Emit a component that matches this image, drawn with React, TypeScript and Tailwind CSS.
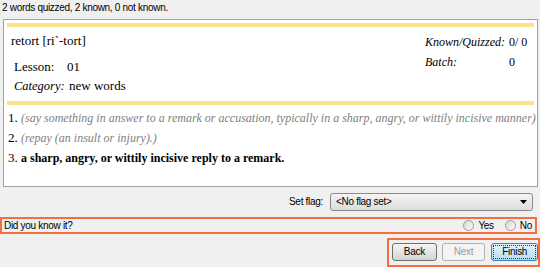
import React from 'react';

const ui = { fontFamily: '"Liberation Sans", Arial, sans-serif' };
const serif = { fontFamily: '"Liberation Serif", "Times New Roman", serif' };

const Radio: React.FC<{ label: string }> = ({ label }) => (
    <label className="flex items-center gap-[4px] text-black">
        <span className="w-[11px] h-[11px] rounded-full border border-[#9a9a9a] bg-gradient-to-br from-[#d8d8d8] to-[#fbfbfb]" />
        <span>{label}</span>
    </label>
);

const Button: React.FC<{ label: string; variant?: 'normal' | 'disabled' | 'default'; className?: string }> = ({
    label,
    variant = 'normal',
    className = '',
}) => {
    if (variant === 'disabled') {
        return (
            <button
                type="button"
                className={`h-[18px] rounded-[3px] border border-[#adb2b5] bg-[#f4f4f4] text-[#9a9a9a] ${className}`}
            >
                {label}
            </button>
        );
    }
    if (variant === 'default') {
        return (
            <button
                type="button"
                className={`h-[18px] rounded-[3px] border border-[#3c7fb1] bg-gradient-to-b from-[#e5f4fc] to-[#b3dcf2] p-[1px] text-black ${className}`}
            >
                <span className="flex h-full w-full items-center justify-center border border-dotted border-[#333]">{label}</span>
            </button>
        );
    }
    return (
        <button
            type="button"
            className={`h-[18px] rounded-[3px] border border-[#707070] bg-gradient-to-b from-[#f4f4f4] to-[#d4d4d4] text-black ${className}`}
        >
            {label}
        </button>
    );
};

export default function App() {
    return (
        <div className="w-[540px] h-[267px] overflow-hidden bg-[#f0f0f0] flex flex-col text-[10px] tracking-[-0.3px]" style={ui}>
            <div className="h-[17px] pl-[2px] leading-[16px] text-black">
                2 words quizzed, 2 known, 0 not known.
            </div>

            <div className="ml-[3px] mt-[2px] w-[535px] h-[172px] border border-[#a0a0a8] bg-white px-[2px] pt-[3px] flex flex-col tracking-normal" style={serif}>
                <div className="h-[4px] bg-[#fde18b] mx-[1px]" />

                <div className="flex justify-between text-[13px] text-black">
                    <div className="flex flex-col">
                        <div className="h-[20px] mt-[4px] leading-[20px] pl-[5px]">retort [ri`-tort]</div>
                        <div className="h-[19px] mt-[6px] leading-[20px] pl-[8px] flex">
                            <span className="w-[53px]">Lesson:</span>
                            <span>01</span>
                        </div>
                        <div className="h-[20px] leading-[20px] pl-[8px] flex">
                            <span className="w-[55px] italic text-[12.5px]">Category:</span>
                            <span>new words</span>
                        </div>
                    </div>
                    <div className="flex flex-col w-[110px] text-[12px]">
                        <div className="h-[20px] mt-[5px] leading-[20px] flex">
                            <span className="w-[84px] italic">Known/Quizzed:</span>
                            <span>0/ 0</span>
                        </div>
                        <div className="h-[20px] leading-[20px] flex">
                            <span className="w-[84px] italic">Batch:</span>
                            <span>0</span>
                        </div>
                    </div>
                </div>

                <div className="h-[4px] bg-[#fde18b] mx-[1px] mt-[5px]" />

                <div className="mt-[3px] text-[12px] leading-[20px] pl-[2px]">
                    <div className="whitespace-nowrap">
                        <span className="text-black text-[13px]">1. </span>
                        <span className="italic text-[#808080]">(say something in answer to a remark or accusation, typically in a sharp, angry, or wittily incisive manner)</span>
                    </div>
                    <div className="whitespace-nowrap">
                        <span className="text-black text-[13px]">2. </span>
                        <span className="italic text-[#808080]">(repay (an insult or injury).)</span>
                    </div>
                    <div className="whitespace-nowrap text-black">
                        <span className="text-[13px]">3. </span>
                        <span className="font-bold">a sharp, angry, or wittily incisive reply to a remark.</span>
                    </div>
                </div>
            </div>

            <div className="mt-[6px] flex items-center justify-end pr-[7px] gap-[7px]">
                <span>Set flag:</span>
                <div className="w-[203px] h-[18px] rounded-[3px] border border-[#8a8a8a] bg-gradient-to-b from-[#f4f4f4] to-[#dcdcdc] flex items-center justify-between pl-[5px] pr-[5px]">
                    <span>&lt;No flag set&gt;</span>
                    <svg width="7" height="4" viewBox="0 0 7 4">
                        <path d="M0 0h7L3.5 4z" fill="#000" />
                    </svg>
                </div>
            </div>

            <div className="mt-[6px] w-[537px] h-[17px] border-2 border-[#f76d3c] flex items-center justify-between pl-[2px] pr-[3px]">
                <span>Did you know it?</span>
                <div className="flex items-center gap-[11px]">
                    <Radio label="Yes" />
                    <Radio label="No" />
                </div>
            </div>

            <div className="mt-[4px] ml-[387px] h-[30px] border-2 border-[#f76d3c] pl-[3px] pt-[3px] flex items-start gap-[5px]">
                <Button label="Back" className="w-[45px]" />
                <Button label="Next" variant="disabled" className="w-[44px]" />
                <Button label="Finish" variant="default" className="w-[47px] ml-[1px]" />
            </div>
        </div>
    );
}
